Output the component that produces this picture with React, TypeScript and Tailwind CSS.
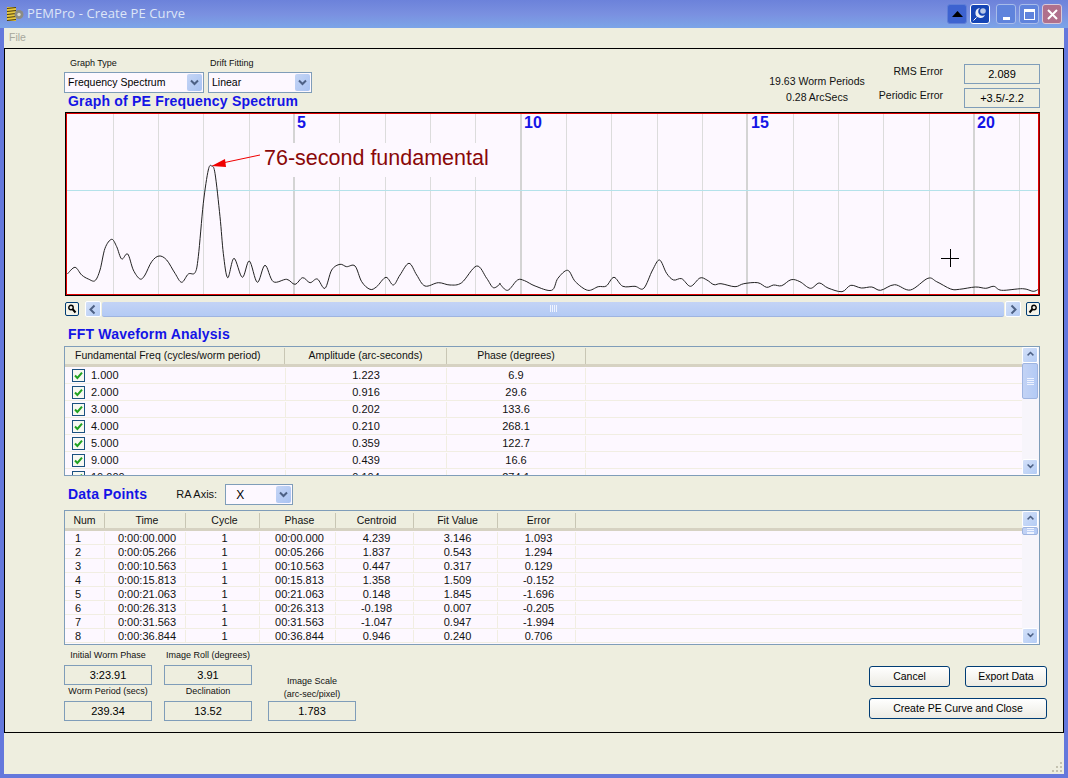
import React from "react";

const z3: number[][] = [[22,492],[45,472],[65,495],[85,507],[105,512],[120,480],[135,415],[155,388],[170,410],[185,447],[203,432],[220,480],[240,507],[255,495],[275,455],[297,438],[320,450],[345,490],[365,517],[385,492],[405,488],[415,440],[430,280],[445,180],[455,168],[465,190],[480,320],[490,430],[503,503],[522,445],[547,502],[568,453],[592,517],[615,466],[640,515],[680,508],[705,523],[728,503],[750,518],[772,507],[795,535],[815,480],[840,463],[860,470],[885,468],[905,515],[930,538],[950,530],[978,502],[1000,525],[1020,495],[1047,460],[1070,495],[1095,528],[1135,518],[1170,525],[1205,518],[1250,468],[1280,505],[1300,533],[1320,522]];
const z4: number[][] = [[0,522],[22,541],[50,510],[70,512],[100,528],[147,541],[165,505],[193,481],[215,515],[250,541],[280,530],[303,528],[325,502],[350,529],[385,529],[410,535],[435,480],[455,450],[475,490],[495,510],[518,506],[543,529],[570,504],[590,510],[610,524],[630,521],[670,530],[695,521],[735,518],[760,532],[780,525],[803,527],[830,509],[855,515],[885,535],[910,519],[935,534],[975,545],[1000,526],[1030,534],[1060,531],[1085,541],[1125,524],[1170,540],[1220,505],[1245,515],[1285,537],[1310,538],[1355,531],[1385,535],[1408,529],[1430,541],[1490,536],[1520,544],[1535,538]];
const pts = [
  ...z3.map(([x, y]) => [x / 3 + 60 - 65, y / 3 + 110 - 112]),
  ...z4.map(([x, y]) => [x / 2.851 + 500 - 65, y / 3 + 110 - 112]),
];
function curve(p: number[][]) {
  let d = `M${p[0][0].toFixed(1)} ${p[0][1].toFixed(1)}`;
  for (let i = 0; i < p.length - 1; i++) {
    const a = p[Math.max(i - 1, 0)], b = p[i], c = p[i + 1], e = p[Math.min(i + 2, p.length - 1)];
    d += ` C${(b[0] + (c[0] - a[0]) / 6).toFixed(1)} ${(b[1] + (c[1] - a[1]) / 6).toFixed(1)} ${(c[0] - (e[0] - b[0]) / 6).toFixed(1)} ${(c[1] - (e[1] - b[1]) / 6).toFixed(1)} ${c[0].toFixed(1)} ${c[1].toFixed(1)}`;
  }
  return d;
}

const fft = [["1.000","1.223","6.9"],["2.000","0.916","29.6"],["3.000","0.202","133.6"],["4.000","0.210","268.1"],["5.000","0.359","122.7"],["9.000","0.439","16.6"],["10.000","0.104","274.1"]];
const data = [
  ["1","0:00:00.000","1","00:00.000","4.239","3.146","1.093"],
  ["2","0:00:05.266","1","00:05.266","1.837","0.543","1.294"],
  ["3","0:00:10.563","1","00:10.563","0.447","0.317","0.129"],
  ["4","0:00:15.813","1","00:15.813","1.358","1.509","-0.152"],
  ["5","0:00:21.063","1","00:21.063","0.148","1.845","-1.696"],
  ["6","0:00:26.313","1","00:26.313","-0.198","0.007","-0.205"],
  ["7","0:00:31.563","1","00:31.563","-1.047","0.947","-1.994"],
  ["8","0:00:36.844","1","00:36.844","0.946","0.240","0.706"],
];
const dataW = [40, 81, 74, 76, 78, 84, 78];
const dataHead = ["Num","Time","Cycle","Phase","Centroid","Fit Value","Error"];

function Combo({ w, value, size = "text-[10.5px]", pad = "pl-[3px]" }: { w: string; value: string; size?: string; pad?: string }) {
  return (
    <div className={`${w} ${size} ${pad} flex h-[21px] items-center justify-between border border-[#7f9db9] bg-[#fdf8ff] pr-[1px] text-black`}>
      <span>{value}</span>
      <span className="flex h-[17px] w-[15px] items-center justify-center rounded-[2px] bg-gradient-to-br from-[#c5d5f5] to-[#a9c3f2]">
        <svg width="9" height="7" viewBox="0 0 9 7"><path d="M1 1.5 4.5 5 8 1.500" fill="none" stroke="#4d6185" strokeWidth="2" /></svg>
      </span>
    </div>
  );
}
function ValueBox({ value, w = "w-[88px]" }: { value: string; w?: string }) {
  return <div className={`${w} flex h-[20px] items-center justify-center border border-[#7f9db9] bg-[#eeeedf] text-[11px] text-black`}>{value}</div>;
}
function Label({ children, cls = "" }: { children: React.ReactNode; cls?: string }) {
  return <div className={`whitespace-nowrap text-center text-[9px] leading-[13px] text-[#111] ${cls}`}>{children}</div>;
}
function Arrow({ dir }: { dir: "up" | "down" | "left" | "right" }) {
  const d = { up: "M1.5 6 5.5 2 9.5 6", down: "M1.5 2 5.5 6 9.5 2", left: "M6.5 1.5 2.5 5.5 6.5 9.5", right: "M3.5 1.5 7.5 5.5 3.5 9.5" }[dir];
  return <svg width="11" height="11" viewBox="0 0 11 11" className={dir === "up" || dir === "down" ? "h-[8px]" : ""}><path d={d} fill="none" stroke="#4d6185" strokeWidth="2" /></svg>;
}
function SBtn({ dir, cls = "" }: { dir: "up" | "down" | "left" | "right"; cls?: string }) {
  return <div className={`flex items-center justify-center rounded-[2px] border border-white bg-gradient-to-br from-[#d3e0f8] to-[#b4ccf5] ${cls}`}><Arrow dir={dir} /></div>;
}
function VScroll({ thumb }: { thumb: string }) {
  return (
    <div className="flex w-[17px] shrink-0 flex-col bg-[#f7f5fb]">
      <SBtn dir="up" cls="h-[16px] w-[16px]" />
      <div className={`${thumb} flex w-[16px] flex-col items-center justify-center gap-[1px] overflow-hidden rounded-[2px] border border-[#9eb4e0] bg-gradient-to-r from-[#c3d3f5] to-[#b3caf5]`}>
        <i className="block h-px w-[7px] bg-[#eef3ff]" /><i className="block h-px w-[7px] bg-[#eef3ff]" /><i className="block h-px w-[7px] bg-[#eef3ff]" /><i className="block h-px w-[7px] bg-[#eef3ff]" />
      </div>
      <div className="flex-1" />
      <SBtn dir="down" cls="h-[16px] w-[16px]" />
    </div>
  );
}
function Mag({ flip = false }: { flip?: boolean }) {
  return (
    <div className="flex h-[14px] w-[14px] items-center justify-center rounded-[2px] border border-[#003c74] bg-[#f4f3ea]">
      <svg width="10" height="10" viewBox="0 0 10 10" className={flip ? "-scale-x-100" : ""}><circle cx="4" cy="3.5" r="2.2" fill="none" stroke="#000" strokeWidth="1.4" /><path d="M5.5 5 8.5 8.5" stroke="#000" strokeWidth="2" /></svg>
    </div>
  );
}
function Check() {
  return (
    <span className="flex h-[13px] w-[13px] items-center justify-center border border-[#1c5180] bg-[#f8f8f2]">
      <svg width="9" height="9" viewBox="0 0 9 9"><path d="M1 4.5 3.4 7 8 1.6" fill="none" stroke="#21a121" strokeWidth="2" /></svg>
    </span>
  );
}
function Btn({ children, w }: { children: React.ReactNode; w: string }) {
  return <button className={`${w} flex h-[21px] items-center justify-center rounded-[3px] border border-[#003c74] bg-gradient-to-b from-white to-[#ecebe3] text-[10.5px] text-black`}>{children}</button>;
}
function Head({ children }: { children: React.ReactNode }) {
  return <div className="text-[14px] font-bold leading-[16px] tracking-[0.2px] text-[#1414e6]">{children}</div>;
}

const gridX = Array.from({ length: 21 }, (_, i) => {
  const x = 47.6 + 45.33 * i;
  return (i + 1) % 5 === 0 ? Math.round(x) : Math.round(x) + 0.5;
});

export default function App() {
  return (
    <div className="flex h-[778px] w-[1068px] flex-col overflow-hidden bg-[#6478dc] font-['Liberation_Sans',Arial,sans-serif]">
      <div className="flex h-[28px] shrink-0 items-center bg-gradient-to-b from-[#6c82da] via-[#7a90e0] to-[#7ba5e8] pl-[5px] pr-[6px]">
        <svg width="20" height="18" viewBox="0 0 20 18" className="shrink-0">
          <rect x="2" y="2" width="9" height="14" fill="#e8c83c" />
          <path d="M2 3.500 11 2.500M2 6.500 11 5.500M2 9.500 11 8.500M2 12.500 11 11.500M2 15.500 11 14.500" stroke="#4a3c10" strokeWidth="1.200" />
          <circle cx="14" cy="9.500" r="4.500" fill="#8c8c84" /><circle cx="14" cy="9.500" r="1.700" fill="#d8d8d0" />
        </svg>
        <div className="ml-[2px] font-['Open_Sans',sans-serif] text-[13px] tracking-[0.1px] text-[#dde6f7]">PEMPro - Create PE Curve</div>
        <div className="ml-auto flex">
          <div className="flex h-[20px] w-[20px] items-center justify-center rounded-[3px] border border-[#5f7fd8] bg-[#3d63d0]"><svg width="11" height="6" viewBox="0 0 11 6"><path d="M5.5 0 11 6H0z" fill="#000" /></svg></div>
          <div className="ml-[3px] flex h-[20px] w-[20px] items-center justify-center rounded-[3px] border border-white bg-[#1545b5]"><svg width="16" height="16" viewBox="0 0 16 16"><path d="M8 2A5 5 0 1 0 13 9 4 4 0 0 1 8 2z" fill="#e8eef8" /><circle cx="11" cy="5" r="2.800" fill="#b8c8e8" /><path d="M4.500 11.500 1.500 14.500" stroke="#fff" /></svg></div>
          <div className="ml-[6px] flex h-[20px] w-[20px] items-end justify-center rounded-[3px] border border-[#a8bcea] bg-[#5f83dc] pb-[3px]"><i className="block h-[3px] w-[7px] bg-white" /></div>
          <div className="ml-[3px] flex h-[20px] w-[20px] items-center justify-center rounded-[3px] border border-[#a8bcea] bg-[#5f83dc]"><i className="block h-[11px] w-[11px] border border-t-[3px] border-white" /></div>
          <div className="ml-[3px] flex h-[20px] w-[20px] items-center justify-center rounded-[3px] border border-[#d8c8d8] bg-[#b0708c]"><svg width="11" height="11" viewBox="0 0 11 11"><path d="M1 1 10 10M10 1 1 10" stroke="#fff" strokeWidth="2" /></svg></div>
        </div>
      </div>

      <div className="ml-[4px] mr-[4px] flex h-[746px] w-[1060px] shrink-0 flex-col bg-[#eeeedf]">
        <div className="flex h-[20px] shrink-0 items-center pl-[5px] text-[10.5px] text-[#a8a89c]">File</div>
        <div className="h-[685px] shrink-0 border border-black pl-[59px]">
          <div className="flex h-[63px] w-[976px] justify-between">
            <div className="flex flex-col">
              <div className="flex h-[23px] items-end pb-[2px] text-[9px] leading-[13px] text-[#111]">
                <span className="ml-[6px] w-[140px]">Graph Type</span><span>Drift Fitting</span>
              </div>
              <div className="flex gap-[4px]">
                <Combo w="w-[140px]" value="Frequency Spectrum" />
                <Combo w="w-[104px]" value="Linear" />
              </div>
              <div className="pl-[4px]"><Head>Graph of PE Frequency Spectrum</Head></div>
            </div>
            <div className="flex pt-[15px]">
              <div className="mr-[4px] mt-[9px] w-[112px] text-center text-[10.5px] leading-[16px] text-[#111]">
                <div>19.63 Worm Periods</div><div>0.28 ArcSecs</div>
              </div>
              <div className="mr-[21px] w-[66px] whitespace-nowrap text-right text-[10.5px] text-[#111]">
                <div className="leading-[14px]">RMS Error</div>
                <div className="mt-[10px] leading-[14px]">Periodic Error</div>
              </div>
              <div className="flex flex-col gap-[4px]">
                <ValueBox w="w-[76px]" value="2.089" />
                <ValueBox w="w-[76px]" value="+3.5/-2.2" />
              </div>
            </div>
          </div>

          <div className="ml-[1px] h-[184px] w-[975px] border border-black border-r-[#800000]">
            <div className="h-[182px] w-[973px] border border-[#e00000] bg-[#fdf8ff]">
              <svg width="971" height="180" viewBox="2 2 971 180" className="block">
                {gridX.map((x, i) => (
                  <line key={i} x1={x} x2={x} y1={0} y2={184} stroke={(i + 1) % 5 === 0 ? "#d4d4d4" : "#dcdcdc"} strokeWidth={(i + 1) % 5 === 0 ? 2 : 1} />
                ))}
                <line x1="2" x2="975" y1="78.5" y2="78.5" stroke="#b4e2ea" />
                <rect x="192" y="31" width="258" height="34" fill="#fdf8ff" />
                <path d={curve(pts)} fill="none" stroke="#222" strokeWidth="1" />
                <line x1="195" y1="43" x2="155" y2="51.500" stroke="#f00000" />
                <path d="M146.500 54 160 47 161 55z" fill="#f00000" />
                <text x="199" y="52.500" fontSize="21.5" fill="#8a0808" fontFamily="Liberation Sans">76-second fundamental</text>
                {[["5", 232], ["10", 459], ["15", 686], ["20", 912]].map(([t, x]) => (
                  <text key={t} x={x} y="16" fontSize="16" fontWeight="700" fill="#1414e6" fontFamily="Liberation Sans">{t}</text>
                ))}
                <path d="M876 146.500H894M885.500 137V155" stroke="#000" />
              </svg>
            </div>
          </div>

          <div className="ml-[1px] mt-[5px] flex h-[16px] w-[975px] items-center">
            <Mag />
            <SBtn dir="left" cls="ml-[6px] h-[16px] w-[16px]" />
            <div className="mx-[1px] flex h-[15px] flex-1 items-center justify-center gap-[1px] rounded-[2px] border-b border-[#9eb4e0] bg-gradient-to-b from-[#c3d3f5] to-[#b3caf5]">
              <i className="block h-[7px] w-px bg-[#eef3ff]" /><i className="block h-[7px] w-px bg-[#eef3ff]" /><i className="block h-[7px] w-px bg-[#eef3ff]" /><i className="block h-[7px] w-px bg-[#eef3ff]" />
            </div>
            <SBtn dir="right" cls="h-[16px] w-[16px]" />
            <div className="ml-[5px]"><Mag flip /></div>
          </div>

          <div className="ml-[4px] mt-[9px]"><Head>FFT Waveform Analysis</Head></div>
          <div className="mt-[4px] flex h-[130px] w-[976px] border border-[#7f9db9] bg-[#fdf8ff]">
            <div className="min-w-0 flex-1 overflow-hidden">
              <div className="flex h-[20px] items-center border-b-[3px] border-[#d6d2c2] bg-[#eeeedf] pt-[1px] text-[10.5px] text-[#111]">
                <div className="w-[220px] border-r border-[#c8c6b4] pl-[10px]">Fundamental Freq (cycles/worm period)</div>
                <div className="w-[162px] border-r border-[#c8c6b4] text-center">Amplitude (arc-seconds)</div>
                <div className="w-[139px] border-r border-[#c8c6b4] text-center">Phase (degrees)</div>
              </div>
              {fft.map((r) => (
                <div key={r[0]} className="flex h-[17px] shrink-0 items-center border-b border-[#f1eee2] pt-[1px] text-[11px] text-[#111]">
                  <div className="flex h-full w-[221px] items-center gap-[6px] border-r border-[#f1eee2] pl-[7px]"><Check />{r[0]}</div>
                  <div className="flex h-full w-[161px] items-center justify-center border-r border-[#f1eee2]">{r[1]}</div>
                  <div className="flex h-full w-[139px] items-center justify-center border-r border-[#f1eee2]">{r[2]}</div>
                </div>
              ))}
            </div>
            <VScroll thumb="h-[36px]" />
          </div>

          <div className="ml-[4px] mt-[8px] flex h-[21px] items-center">
            <div className="pb-[2px]"><Head>Data Points</Head></div>
            <span className="ml-[29px] text-[11px] text-[#111]">RA Axis:</span>
            <div className="ml-[8px]"><Combo w="w-[68px]" value="X" size="text-[12px]" pad="pl-[10px]" /></div>
          </div>
          <div className="mt-[5px] flex h-[135px] w-[976px] border border-[#7f9db9] bg-[#fdf8ff]">
            <div className="min-w-0 flex-1 overflow-hidden">
              <div className="flex h-[20px] items-center border-b-[3px] border-[#d6d2c2] bg-[#eeeedf] pt-[2px] text-[10.5px] text-[#111]">
                {dataHead.map((h, i) => (
                  <div key={h} className={`border-r border-[#c8c6b4] text-center ${i === 0 ? "" : "pl-[4px]"}`} style={{ width: dataW[i] }}>{h}</div>
                ))}
              </div>
              {data.map((r) => (
                <div key={r[0]} className="flex h-[14px] items-center border-b border-[#f1eee2] pt-[1px] text-[11px] leading-[12px] text-[#111]">
                  {r.map((c, i) => (
                    <div key={i} className={`flex h-full items-center border-r border-[#f1eee2] ${i === 0 ? "pl-[10px]" : "justify-center pl-[4px]"}`} style={{ width: dataW[i] }}>{c}</div>
                  ))}
                </div>
              ))}
            </div>
            <VScroll thumb="h-[8px]" />
          </div>

          <div className="mt-[4px] flex w-[983px]">
            <div className="w-[88px]">
              <Label cls="h-[16px]">Initial Worm Phase</Label>
              <ValueBox value="3:23.91" />
              <Label cls="h-[16px]">Worm Period (secs)</Label>
              <ValueBox value="239.34" />
            </div>
            <div className="ml-[12px] w-[88px]">
              <Label cls="h-[16px]">Image Roll (degrees)</Label>
              <ValueBox value="3.91" />
              <Label cls="h-[16px]">Declination</Label>
              <ValueBox value="13.52" />
            </div>
            <div className="ml-[16px] flex w-[88px] flex-col justify-end">
              <Label>Image Scale<br />(arc-sec/pixel)</Label>
              <ValueBox value="1.783" />
            </div>
            <div className="ml-auto flex w-[178px] flex-col gap-[11px] pt-[17px]">
              <div className="flex justify-between">
                <Btn w="w-[81px]">Cancel</Btn>
                <Btn w="w-[82px]">Export Data</Btn>
              </div>
              <Btn w="w-[178px]">Create PE Curve and Close</Btn>
            </div>
          </div>
        </div>
        <div className="flex flex-1 items-end justify-end pb-[1px] pr-[1px]">
          <svg width="12" height="12" viewBox="0 0 12 12"><g fill="#c4c2b0"><rect x="9" y="1" width="2" height="2" /><rect x="5" y="5" width="2" height="2" /><rect x="9" y="5" width="2" height="2" /><rect x="1" y="9" width="2" height="2" /><rect x="5" y="9" width="2" height="2" /><rect x="9" y="9" width="2" height="2" /></g></svg>
        </div>
      </div>
    </div>
  );
}
